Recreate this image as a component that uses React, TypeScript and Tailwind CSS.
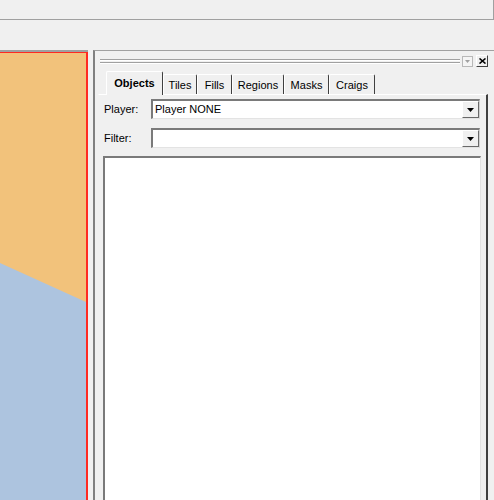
import React from 'react';

const tabs = [
  { label: 'Objects', w: 57, active: true },
  { label: 'Tiles', w: 34 },
  { label: 'Fills', w: 35 },
  { label: 'Regions', w: 52 },
  { label: 'Masks', w: 45 },
  { label: 'Craigs', w: 46 },
];

const DropArrow = () => (
  <svg width="7" height="4" viewBox="0 0 7 4">
    <path d="M0 0 H7 L3.5 4 Z" fill="#000" />
  </svg>
);

const Combo = ({ value }: { value: string }) => (
  <div className="flex h-[20px] w-[329px] border-t-2 border-l-2 border-t-[#7a7a7a] border-l-[#7a7a7a] border-b border-r border-b-[#e3e3e3] border-r-[#d0d0d0] bg-white">
    <div className="flex-1 pl-[2px] text-[11px] leading-[17px] text-black">{value}</div>
    <div className="flex h-[17px] w-[17px] items-center justify-center border-t border-l border-t-white border-l-white border-b border-r border-b-[#696969] border-r-[#696969] bg-[#f0f0f0]">
      <DropArrow />
    </div>
  </div>
);

const App = () => {
  return (
    <div
      className="relative h-[500px] w-[494px] overflow-hidden bg-[#f0f0f0] text-black"
      style={{ fontFamily: '"Liberation Sans", Arial, sans-serif' }}
    >
      {/* top toolbar */}
      <div className="h-[20px] w-[494px] border-b border-r border-[#a0a0a0]" />
      <div className="h-[30px]" />

      <div className="flex h-[450px]">
        {/* map canvas */}
        <div className="h-full w-[88px] border-t-2 border-[#a0a0a0]">
          <div className="h-full border-t border-r-2 border-[#ff2a22]">
            <svg width="86" height="447" viewBox="0 0 86 447" className="block">
              <rect width="86" height="447" fill="#f2c27b" />
              <polygon points="0,210 86,249 86,447 0,447" fill="#adc4df" />
            </svg>
          </div>
        </div>

        <div className="w-[5px]" />

        {/* objects panel */}
        <div className="flex h-full w-[401px] flex-col border-t border-l-2 border-t-[#a0a0a0] border-l-[#808080]">
          {/* caption */}
          <div className="flex h-[20px] items-center">
            <div className="ml-[5px] flex w-[360px] flex-col gap-[1px]">
              <div className="h-[2px] border-t border-b border-t-[#a0a0a0] border-b-white" />
              <div className="h-[2px] border-t border-b border-t-[#a0a0a0] border-b-white" />
            </div>
            <div className="ml-[2px] flex h-[11px] w-[11px] items-center justify-center border border-[#b8b8b8] bg-[#f4f4f4]">
              <svg width="5" height="3" viewBox="0 0 5 3">
                <path d="M0 0 H5 L2.5 3 Z" fill="#a0a0a0" />
              </svg>
            </div>
            <div className="ml-[3px] flex h-[12px] w-[12px] items-center justify-center border border-t-white border-l-white border-b-[#404040] border-r-[#404040] bg-[#f0f0f0]">
              <svg width="7" height="6" viewBox="0 0 7 6">
                <path d="M0.5 0.5 L6.5 5.5 M6.5 0.5 L0.5 5.5" stroke="#000" strokeWidth="1.6" />
              </svg>
            </div>
          </div>

          {/* tab strip */}
          <div className="flex h-[23px] items-end pl-[11px]">
            {tabs.map((t) =>
              t.active ? (
                <div
                  key={t.label}
                  className="relative z-10 -mb-px flex h-[24px] items-center justify-center rounded-t-[2px] border-t border-l border-r border-t-white border-l-white border-r-[#404040] bg-[#f0f0f0] text-[11px] font-bold"
                  style={{ width: t.w }}
                >
                  {t.label}
                </div>
              ) : (
                <div
                  key={t.label}
                  className="flex h-[20px] items-center justify-center rounded-t-[2px] border-t border-l border-r border-t-white border-l-white border-r-[#404040] bg-[#f0f0f0] pt-[1px] text-[11px]"
                  style={{ width: t.w }}
                >
                  {t.label}
                </div>
              )
            )}
          </div>

          {/* tab page */}
          <div className="flex w-[395px] flex-1 flex-col">
            <div className="ml-[3px] flex w-[390px] flex-1 flex-col border-t border-l border-r-2 border-t-white border-l-[#f0f0f0] border-r-[#404040]">
              <div className="mt-[4px] flex items-center">
                <span className="w-[52px] pl-[5px] text-[11px]">Player:</span>
                <Combo value="Player NONE" />
              </div>
              <div className="mt-[9px] flex items-center">
                <span className="w-[52px] pl-[5px] text-[11px]">Filter:</span>
                <Combo value="" />
              </div>
              <div className="ml-[4px] mt-[8px] w-[378px] flex-1 border-t-2 border-l-2 border-t-[#7a7a7a] border-l-[#7a7a7a] border-r border-r-[#e3e3e3] bg-white" />
            </div>
          </div>
        </div>
      </div>
    </div>
  );
};

export default App;
